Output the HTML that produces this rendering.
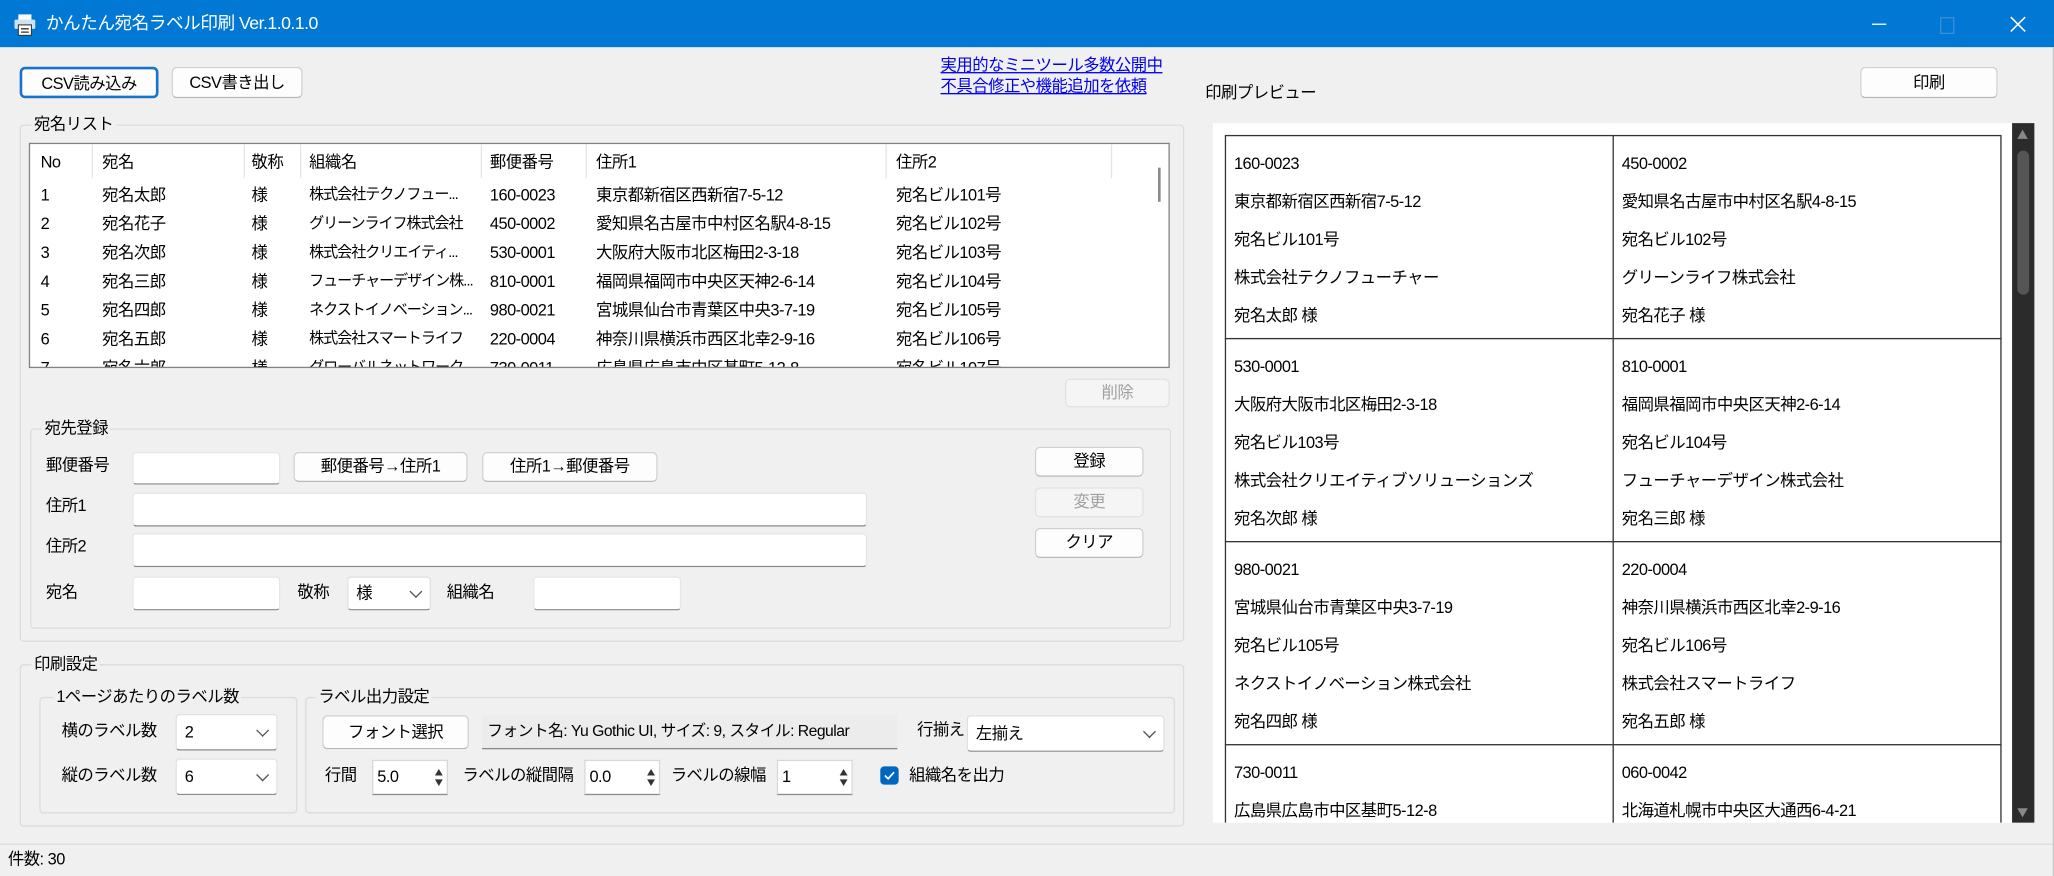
<!DOCTYPE html>
<html><head><meta charset="utf-8"><style>
html,body{margin:0;padding:0;width:2054px;height:876px;overflow:hidden;background:#f0f0f0}
#w{position:absolute;left:0;top:0;width:1568px;height:669px;overflow:hidden;transform:scale(1.30995);transform-origin:0 0;background:#f0f0f0;font-family:"Liberation Sans","Noto Sans CJK JP",sans-serif;font-size:12.5px;letter-spacing:-0.4px;color:#000}
.a{position:absolute;white-space:nowrap;line-height:16px}
.btn{position:absolute;background:#fdfdfd;border:1px solid #d0d0d0;border-bottom-color:#b8b8b8;border-radius:4px;text-align:center;box-sizing:border-box;white-space:nowrap}
.dis{color:#a0a0a0;background:#f5f5f5;border-color:#e2e2e2}
.inp{position:absolute;background:#fff;border:1px solid #e6e6e6;border-bottom:1px solid #8a8a8a;box-sizing:border-box;border-radius:3px}
.grp{position:absolute;border:1px solid #dcdcdc;border-radius:3px;box-sizing:border-box}
.gl{position:absolute;background:#f0f0f0;padding:0 2px;line-height:16px;white-space:nowrap}
.sel{position:absolute;background:#fff;border:1px solid #e0e0e0;border-bottom:1px solid #8a8a8a;box-sizing:border-box;border-radius:3px;padding-left:6px}
.sel:after{content:"";position:absolute;right:7px;top:50%;width:6px;height:6px;border-right:1px solid #555;border-bottom:1px solid #555;transform:translateY(-70%) rotate(45deg)}
.num{position:absolute;background:#fff;border:1px solid #d8d8d8;border-bottom:1px solid #8a8a8a;box-sizing:border-box;padding-left:3px}
.num .up,.num .dn{position:absolute;right:3px;width:0;height:0;border-left:3px solid transparent;border-right:3px solid transparent}
.num .up{top:6px;border-bottom:5px solid #333}
.num .dn{bottom:6px;border-top:5px solid #333}
.cell{position:absolute;border:1px solid #333;box-sizing:border-box;width:297px;height:156px;background:#fff}
.cell div{position:absolute;left:6px;white-space:nowrap;font-size:12.5px;line-height:16px}
</style></head><body><div id="w">
<div style="position:absolute;left:0;top:0;width:1568px;height:36px;background:#0078d4"></div>
<svg style="position:absolute;left:11px;top:10px" width="16" height="18" viewBox="0 0 16 18"><rect x="3" y="1" width="10" height="5" fill="#fff"/><rect x="0" y="5" width="16" height="7" rx="1" fill="#cfe3f5"/><rect x="3" y="9" width="10" height="8" fill="#fff" stroke="#333" stroke-width="0.8"/><line x1="5" y1="12" x2="11" y2="12" stroke="#333"/><line x1="5" y1="14.5" x2="11" y2="14.5" stroke="#333"/></svg>
<div class="a" style="left:35px;top:10px;color:#fff;font-size:13.5px">かんたん宛名ラベル印刷 Ver.1.0.1.0</div>
<div style="position:absolute;left:1429px;top:18px;width:11px;height:1px;background:#fff"></div>
<div style="position:absolute;left:1481px;top:13px;width:9px;height:11px;border:1px solid #3a8fd9"></div>
<svg style="position:absolute;left:1534px;top:12px" width="13" height="13"><path d="M1 1L12 12M12 1L1 12" stroke="#fff" stroke-width="1.2"/></svg>
<div style="position:absolute;left:1567px;top:36px;width:1px;height:633px;background:#c8c8c8"></div>

<div class="btn" style="left:15px;top:51px;width:106px;height:24px;line-height:22px;border:2px solid #1a73c8">CSV読み込み</div>
<div class="btn" style="left:131px;top:51px;width:100px;height:24px;line-height:22px">CSV書き出し</div>
<div class="a" style="left:718px;top:42px;color:#0000ee;text-decoration:underline">実用的なミニツール多数公開中</div>
<div class="a" style="left:718px;top:58px;color:#0000ee;text-decoration:underline">不具合修正や機能追加を依頼</div>

<div class="grp" style="left:15px;top:95px;width:889px;height:395px"></div>
<div class="gl" style="left:24px;top:87px">宛名リスト</div>
<div style="position:absolute;left:22px;top:109px;width:871px;height:172px;background:#fff;border:1px solid #828282;box-sizing:border-box;overflow:hidden">
 <div style="position:absolute;left:0;top:0;width:100%;height:26px;">
  <div class="a" style="left:8px;top:6px">No</div>
  <div class="a" style="left:55px;top:6px">宛名</div>
  <div class="a" style="left:169px;top:6px">敬称</div>
  <div class="a" style="left:213px;top:6px">組織名</div>
  <div class="a" style="left:351px;top:6px">郵便番号</div>
  <div class="a" style="left:432px;top:6px">住所1</div>
  <div class="a" style="left:661px;top:6px">住所2</div>
  <div style="position:absolute;left:47px;top:0;width:1px;height:26px;background:#e5e5e5"></div>
  <div style="position:absolute;left:163px;top:0;width:1px;height:26px;background:#e5e5e5"></div>
  <div style="position:absolute;left:206px;top:0;width:1px;height:26px;background:#e5e5e5"></div>
  <div style="position:absolute;left:344px;top:0;width:1px;height:26px;background:#e5e5e5"></div>
  <div style="position:absolute;left:424px;top:0;width:1px;height:26px;background:#e5e5e5"></div>
  <div style="position:absolute;left:653px;top:0;width:1px;height:26px;background:#e5e5e5"></div>
  <div style="position:absolute;left:825px;top:0;width:1px;height:26px;background:#e5e5e5"></div>
 </div>
 <div style="position:absolute;left:861px;top:18px;width:2px;height:26px;background:#8a8a8a"></div>
 <div id="rows"></div>
</div>
<div class="btn dis" style="left:813px;top:289px;width:80px;height:22px;line-height:20px">削除</div>

<div class="grp" style="left:23px;top:327px;width:871px;height:153px"></div>
<div class="gl" style="left:32px;top:319px">宛先登録</div>
<div class="a" style="left:35px;top:347px">郵便番号</div>
<div class="inp" style="left:101px;top:345px;width:113px;height:25px"></div>
<div class="btn" style="left:224px;top:345px;width:133px;height:23px;line-height:21px">郵便番号→住所1</div>
<div class="btn" style="left:368px;top:345px;width:134px;height:23px;line-height:21px">住所1→郵便番号</div>
<div class="a" style="left:35px;top:378px">住所1</div>
<div class="inp" style="left:101px;top:376px;width:561px;height:26px"></div>
<div class="a" style="left:35px;top:409px">住所2</div>
<div class="inp" style="left:101px;top:407px;width:561px;height:26px"></div>
<div class="a" style="left:35px;top:444px">宛名</div>
<div class="inp" style="left:101px;top:440px;width:113px;height:26px"></div>
<div class="a" style="left:227px;top:444px">敬称</div>
<div class="sel" style="left:265px;top:440px;width:64px;height:26px;line-height:24px">様</div>
<div class="a" style="left:341px;top:444px">組織名</div>
<div class="inp" style="left:407px;top:440px;width:113px;height:26px"></div>
<div class="btn" style="left:790px;top:341px;width:83px;height:23px;line-height:21px">登録</div>
<div class="btn dis" style="left:790px;top:372px;width:83px;height:23px;line-height:21px">変更</div>
<div class="btn" style="left:790px;top:403px;width:83px;height:23px;line-height:21px">クリア</div>

<div class="grp" style="left:15px;top:507px;width:889px;height:124px"></div>
<div class="gl" style="left:24px;top:499px">印刷設定</div>
<div class="grp" style="left:30px;top:532px;width:197px;height:89px"></div>
<div class="gl" style="left:41px;top:524px">1ページあたりのラベル数</div>
<div class="a" style="left:47px;top:550px">横のラベル数</div>
<div class="sel" style="left:134px;top:545px;width:78px;height:28px;line-height:26px">2</div>
<div class="a" style="left:47px;top:584px">縦のラベル数</div>
<div class="sel" style="left:134px;top:579px;width:78px;height:28px;line-height:26px">6</div>
<div class="grp" style="left:233px;top:532px;width:664px;height:89px"></div>
<div class="gl" style="left:241px;top:524px">ラベル出力設定</div>
<div class="btn" style="left:246px;top:546px;width:112px;height:26px;line-height:24px">フォント選択</div>
<div style="position:absolute;left:368px;top:546px;width:317px;height:26px;background:#ececec;border-bottom:1px solid #8a8a8a;box-sizing:border-box;line-height:24px;padding-left:4px;white-space:nowrap;font-size:12px;overflow:hidden">フォント名: Yu Gothic UI, サイズ: 9, スタイル: Regular</div>
<div class="a" style="left:700px;top:549px">行揃え</div>
<div class="sel" style="left:738px;top:546px;width:151px;height:28px;line-height:26px">左揃え</div>
<div class="a" style="left:248px;top:584px">行間</div>
<div class="num" style="left:284px;top:580px;width:58px;height:27px;line-height:25px">5.0<span class="up"></span><span class="dn"></span></div>
<div class="a" style="left:353px;top:584px">ラベルの縦間隔</div>
<div class="num" style="left:446px;top:580px;width:58px;height:27px;line-height:25px">0.0<span class="up"></span><span class="dn"></span></div>
<div class="a" style="left:512px;top:584px">ラベルの線幅</div>
<div class="num" style="left:593px;top:580px;width:58px;height:27px;line-height:25px">1<span class="up"></span><span class="dn"></span></div>
<div style="position:absolute;left:672px;top:585px;width:14px;height:14px;background:#0067c0;border-radius:3px"></div>
<svg style="position:absolute;left:674px;top:587px" width="10" height="10"><path d="M1.5 5L4 7.5L8.5 2.5" stroke="#fff" stroke-width="1.3" fill="none"/></svg>
<div class="a" style="left:694px;top:584px">組織名を出力</div>

<div style="position:absolute;left:0;top:644px;width:1567px;height:1px;background:#dcdcdc"></div>
<div class="a" style="left:6px;top:648px">件数: 30</div>

<div class="a" style="left:920px;top:63px">印刷プレビュー</div>
<div class="btn" style="left:1420px;top:51px;width:105px;height:24px;line-height:22px">印刷</div>
<div style="position:absolute;left:926px;top:94px;width:610px;height:534px;background:#fff;overflow:hidden" id="pv"></div>
<div style="position:absolute;left:1536px;top:94px;width:17px;height:534px;background:#2b2b2b"></div>
<div style="position:absolute;left:1540px;top:99px;width:0;height:0;border-left:4px solid transparent;border-right:4px solid transparent;border-bottom:7px solid #888"></div>
<div style="position:absolute;left:1540px;top:115px;width:9px;height:110px;background:#555;border-radius:5px"></div>
<div style="position:absolute;left:1540px;top:617px;width:0;height:0;border-left:4px solid transparent;border-right:4px solid transparent;border-top:7px solid #888"></div>
</div>
<script>
var R=[["1","宛名太郎","株式会社テクノフュー...","160-0023","東京都新宿区西新宿7-5-12","宛名ビル101号"],
["2","宛名花子","グリーンライフ株式会社","450-0002","愛知県名古屋市中村区名駅4-8-15","宛名ビル102号"],
["3","宛名次郎","株式会社クリエイティ...","530-0001","大阪府大阪市北区梅田2-3-18","宛名ビル103号"],
["4","宛名三郎","フューチャーデザイン株...","810-0001","福岡県福岡市中央区天神2-6-14","宛名ビル104号"],
["5","宛名四郎","ネクストイノベーション...","980-0021","宮城県仙台市青葉区中央3-7-19","宛名ビル105号"],
["6","宛名五郎","株式会社スマートライフ","220-0004","神奈川県横浜市西区北幸2-9-16","宛名ビル106号"],
["7","宛名六郎","グローバルネットワーク...","730-0011","広島県広島市中区基町5-12-8","宛名ビル107号"]];
var xs=[8,55,169,213,351,432,661],h="";
R.forEach(function(r,i){var y=31+i*22;var c=[r[0],r[1],"様",r[2],r[3],r[4],r[5]];
c.forEach(function(t,j){h+='<div class="a" style="left:'+xs[j]+'px;top:'+y+'px;width:'+(j==3?128:300)+'px;overflow:hidden;'+(j==3?'font-size:11.5px;letter-spacing:-0.8px':'')+'">'+t+'</div>';});});
document.getElementById("rows").innerHTML=h;
var L=[["160-0023","東京都新宿区西新宿7-5-12","宛名ビル101号","株式会社テクノフューチャー","宛名太郎 様"],
["450-0002","愛知県名古屋市中村区名駅4-8-15","宛名ビル102号","グリーンライフ株式会社","宛名花子 様"],
["530-0001","大阪府大阪市北区梅田2-3-18","宛名ビル103号","株式会社クリエイティブソリューションズ","宛名次郎 様"],
["810-0001","福岡県福岡市中央区天神2-6-14","宛名ビル104号","フューチャーデザイン株式会社","宛名三郎 様"],
["980-0021","宮城県仙台市青葉区中央3-7-19","宛名ビル105号","ネクストイノベーション株式会社","宛名四郎 様"],
["220-0004","神奈川県横浜市西区北幸2-9-16","宛名ビル106号","株式会社スマートライフ","宛名五郎 様"],
["730-0011","広島県広島市中区基町5-12-8","宛名ビル107号","",""],
["060-0042","北海道札幌市中央区大通西6-4-21","宛名ビル108号","",""]];
var p="";L.forEach(function(l,i){var col=i%2,row=Math.floor(i/2);var x=9+col*296,y=9+row*155;
p+='<div class="cell" style="left:'+x+'px;top:'+y+'px">';l.forEach(function(t,k){p+='<div style="top:'+(13+k*29)+'px">'+t+'</div>';});p+='</div>';});
document.getElementById("pv").innerHTML=p;
</script>
</body></html>
